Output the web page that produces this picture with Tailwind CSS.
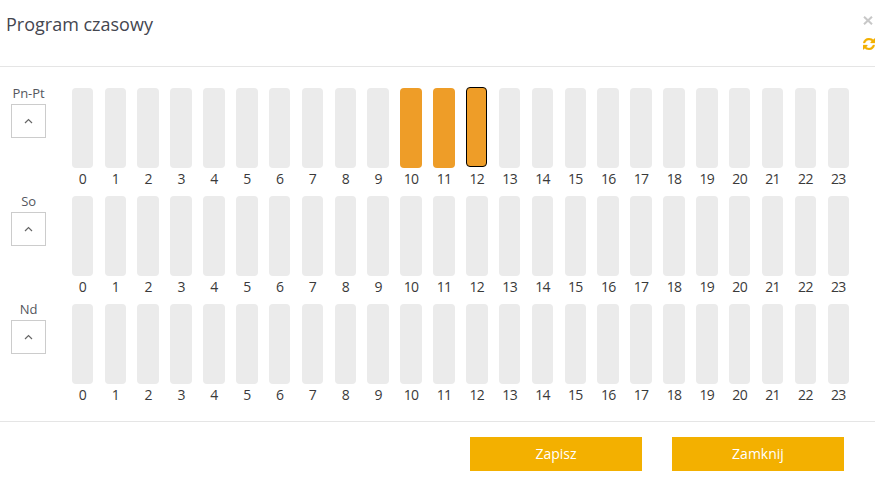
<!DOCTYPE html>
<html lang="pl">
<head>
    <meta charset="UTF-8">
    <meta name="viewport" content="width=device-width, initial-scale=1.0">
    <title>Program czasowy</title>
    <script src="https://cdn.jsdelivr.net/npm/@tailwindcss/browser@4"></script>
</head>
<body class="bg-white font-['Open_Sans',sans-serif] text-[#44464f] h-[481px] overflow-hidden">
    <!-- Header -->
    <header class="flex justify-between h-[67px] border-b border-[#e5e5e5] pl-[6px]">
        <h1 class="text-[18px] leading-[26px] pt-[11px]">Program czasowy</h1>
        <div class="flex flex-col items-end pt-[16px]">
            <button class="mr-[2px]" aria-label="Zamknij okno">
                <svg class="block w-[10px] h-[9px]" viewBox="0 0 10 9" fill="none" stroke="#c8c8c8" stroke-width="2">
                    <path d="M1 .7l8 7.600M9 .7l-8 7.600"/>
                </svg>
            </button>
            <button class="mt-[13px]" aria-label="Odśwież">
                <svg class="block w-[12px] h-[12px]" viewBox="0 0 1536 1536" fill="#f3b000" stroke="#f3b000" stroke-width="40">
                    <path d="M1511 928q0 5-1 7-64 268-268 434.500T764 1536q-146 0-282.500-55T238 1324l-129 129q-19 19-45 19t-45-19-19-45V960q0-26 19-45t45-19h448q26 0 45 19t19 45-19 45l-137 137q71 66 161 102t187 36q134 0 250-65t186-179q11-17 53-117 8-23 30-23h192q13 0 22.500 9.500t9.500 22.500zm25-800v448q0 26-19 45t-45 19h-448q-26 0-45-19t-19-45 19-45l138-138Q969 256 768 256q-134 0-250 65T332 500q-11 17-53 117-8 23-30 23H50q-13 0-22.500-9.500T18 608v-7q65-268 270-434.500T768 0q146 0 284 55.500T1297 212l130-129q19-19 45-19t45 19 19 45z"/>
                </svg>
            </button>
        </div>
    </header>

    <!-- Schedule -->
    <main id="schedule" class="h-[354px] pt-[20px]"></main>

    <!-- Footer -->
    <footer class="flex justify-end gap-[30px] border-t border-[#e5e5e5] pt-[15px] pr-[31px]">
        <button class="w-[172px] h-[34px] pb-[2px] bg-[#f3b000] text-white text-[14px]">Zapisz</button>
        <button class="w-[172px] h-[34px] pb-[2px] bg-[#f3b000] text-white text-[14px]">Zamknij</button>
    </footer>

    <script>
        const days = [
            { name: 'Pn-Pt', active: [10, 11, 12], focused: 12 },
            { name: 'So', active: [], focused: null },
            { name: 'Nd', active: [], focused: null }
        ];

        // Bar for a single hour
        function barClass(day, hour) {
            if (hour === day.focused) {
                return 'w-[21px] h-[80px] -mt-px mb-px rounded-[4px] bg-[#ee9d28] border border-black';
            }
            if (day.active.includes(hour)) {
                return 'w-[21.5px] h-[80px] rounded-[4px] bg-[#ee9d28]';
            }
            return 'w-[21.5px] h-[80px] rounded-[4px] bg-[#ebebeb]';
        }

        document.getElementById('schedule').innerHTML = days.map(day => {
            let hours = '';
            for (let h = 0; h < 24; h++) {
                hours += `
                    <div class="flex flex-col items-center">
                        <div class="${barClass(day, h)}"></div>
                        <span class="text-[14px] leading-[18px] mt-[2px] tracking-[-0.7px] text-[#3a3a3a]">${h}</span>
                    </div>`;
            }
            return `
                <section class="flex h-[108px]">
                    <div class="flex flex-col items-center w-[57px]">
                        <span class="text-[13px] leading-[13px] pb-[4px] tracking-[-0.1px] text-[#55575e]">${day.name}</span>
                        <button class="flex items-center justify-center w-[35px] h-[34px] border border-[#cccccc]">
                            <svg class="w-[9px] h-[6px]" viewBox="0 0 9 6" fill="none" stroke="#666" stroke-width="1.2">
                                <path d="M1 5l3.500-3.500L8 5"/>
                            </svg>
                        </button>
                    </div>
                    <div class="grid grid-cols-24 w-[788.6px] ml-[9.1px] pt-px">${hours}</div>
                </section>`;
        }).join('');
    </script>
</body>
</html>
